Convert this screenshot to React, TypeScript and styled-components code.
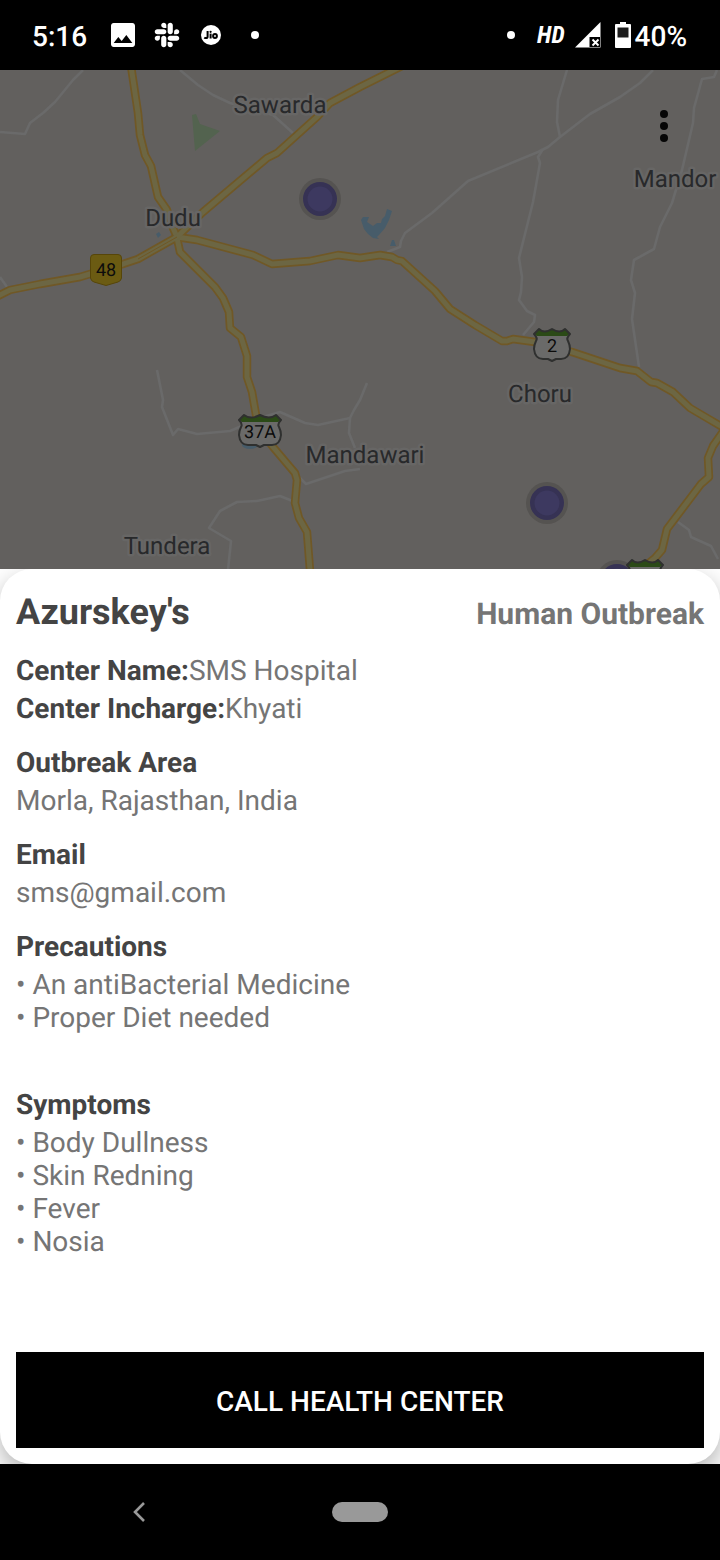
import React from "react";
import styled, { createGlobalStyle } from "styled-components";
import { FaSlack } from "react-icons/fa";

const GlobalStyle = createGlobalStyle`
  *, *::before, *::after { box-sizing: border-box; }
  body {
    margin: 0;
    background: #000;
    font-family: Roboto, "Liberation Sans", sans-serif;
    text-rendering: geometricPrecision;
  }
  h1, h2, p, ul { margin: 0; padding: 0; }
  button { font: inherit; border: 0; padding: 0; cursor: pointer; }
`;

const Screen = styled.div`
  display: flex;
  flex-direction: column;
  min-height: 100vh;
`;

const StatusBar = styled.header`
  position: relative;
  z-index: 1;
  display: flex;
  align-items: center;
  justify-content: space-between;
  height: 70px;
  padding: 0 33px 0 32px;
  background: #000;
  color: #fff;
  font-size: 28px;
  font-weight: 500;
  line-height: 36px;
`;

const StatusGroup = styled.div<{ $gap: number }>`
  display: flex;
  align-items: center;
  gap: ${(p) => p.$gap}px;
`;

const StatusText = styled.span`
  padding-top: 4px;
`;

const StatusSlot = styled.span`
  display: flex;
  align-items: center;
  justify-content: center;
  width: 28px;
  height: 28px;
`;

const Notifications = styled(StatusGroup)`
  margin-left: 6px;
`;

const Battery = styled(StatusGroup)`
  margin-left: 4px;
`;

const Dot = styled.span`
  width: 8px;
  height: 8px;
  border-radius: 50%;
  background: #fff;
`;

const Hd = styled.span`
  padding-left: 12px;
  font-family: "Roboto Condensed", Roboto, "Liberation Sans", sans-serif;
  font-size: 24px;
  font-style: italic;
  font-weight: 700;
`;

const MapArea = styled.main`
  position: relative;
  display: flex;
  flex: 1 0 300px;
  overflow: hidden;
  background: #62605e;
`;

const MapSvg = styled.svg`
  flex: 1;
  width: 100%;
  min-width: 0;
  height: auto;
  min-height: 100%;
  font-family: Roboto, "Liberation Sans", sans-serif;
`;

const MenuButton = styled.button`
  position: absolute;
  top: 32px;
  right: 32px;
  display: flex;
  flex-direction: column;
  align-items: center;
  justify-content: center;
  gap: 4px;
  width: 48px;
  height: 48px;
  background: none;
`;

const MenuDot = styled.span`
  width: 8px;
  height: 8px;
  border-radius: 50%;
  background: #060606;
`;

const SheetBackdrop = styled.div`
  background: #fff;
`;

const Sheet = styled.section`
  display: flex;
  flex-direction: column;
  gap: 21px;
  padding: 22px 16px 16px;
  border-radius: 32px;
  background: #fff;
  box-shadow: 0 10px 24px rgba(0, 0, 0, 0.3);
  color: #757575;
  font-size: 28px;
  line-height: 33px;
`;

const SheetHeader = styled.div`
  display: flex;
  align-items: baseline;
  justify-content: space-between;
`;

const Title = styled.h1`
  color: #444;
  font-size: 36px;
  font-weight: 700;
  line-height: 42px;
`;

const Kind = styled.p`
  font-size: 30px;
  font-weight: 700;
`;

const Group = styled.div`
  display: flex;
  flex-direction: column;
  gap: 5px;
`;

const Label = styled.h2`
  color: #444;
  font-size: 28px;
  font-weight: 700;
`;

const InlineLabel = styled.strong`
  color: #444;
  font-weight: 700;
`;

const BulletList = styled.ul`
  padding-bottom: 33px;
  list-style: none;
`;

const CallButton = styled.button`
  height: 96px;
  margin-top: 40px;
  padding-top: 2px;
  background: #000;
  color: #fff;
  font-size: 28px;
  font-weight: 500;
`;

const NavBar = styled.nav`
  position: relative;
  z-index: 1;
  display: grid;
  grid-template-columns: 1fr auto 1fr;
  align-items: center;
  height: 96px;
  background: #000;
`;

const BackButton = styled.button`
  display: flex;
  align-items: center;
  justify-content: center;
  width: 84px;
  height: 64px;
  margin-left: 97px;
  background: none;
`;

const HomeButton = styled.button`
  width: 56px;
  height: 20px;
  border-radius: 10px;
  background: #999;
`;

const minorRoads = [
  "M83 0 73 10 55 32 43 43 30 53 25 64 0 62",
  "M180 0 198 15 213 25 230 33 273 45 293 63",
  "M0 207 7 217",
  "M567 0 558 30 557 52 560 67",
  "M653 0 640 13 620 27 590 44 560 67 548 77 538 82 468 111 432 143 405 163 401 171 400 177 387 182",
  "M543 79 538 87 540 93 533 132 519 188 522 207 521 222 519 230 527 241 535 245 534 252 523 265",
  "M717 0 714 7 702 9 694 38 693 53 682 100 672 133 660 157 654 179 634 190 631 210 635 223 632 249 639 297",
  "M157 300 163 330 162 337 173 365 178 359 197 364 230 361 263 347 280 342 305 353 318 355 350 348 354 340 360 330 367 313",
  "M350 348 349 363 355 378",
  "M300 408 306 414 345 401 360 399",
  "M295 432 280 426 257 431 237 432 220 441 209 458 231 471 228 500",
  "M678 452 689 460 691 467 711 476 718 489",
];

const highways = [
  "M131 -4 138 43 140 65 145 85 151 96 158 127 167 140 173 158 177 167",
  "M177 168 180 182 200 202 215 217 223 228 229 242 230 258 241 267 247 286 247 307 252 322 256 345 260 360 273 377 295 403 297 410 295 433 299 448 307 462 310 500",
  "M177 167 197 170 253 185 272 194 310 191 338 185 360 188 380 185 392 187 397 190 402 191 435 221 450 239 475 255 502 271 507 271 513 269 535 272 572 282 620 298 637 301 651 312 657 313 673 322 690 338 707 348 724 358",
  "M724 360 713 376 708 388 709 407 701 414 667 459 662 480 655 488 640 500",
  "M402 -4 360 17 330 33 317 47 277 83 267 88 203 142 177 167 138 189 123 194 80 207 40 214 10 220 -4 227",
];

const places = [
  { name: "Sawarda", x: 280, y: 43 },
  { name: "Dudu", x: 173, y: 156 },
  { name: "Mandor", x: 675, y: 117 },
  { name: "Choru", x: 540, y: 332 },
  { name: "Mandawari", x: 365, y: 393 },
  { name: "Tundera", x: 167, y: 484 },
];

const outbreaks = [
  { x: 320, y: 129 },
  { x: 547, y: 433 },
  { x: 617, y: 511 },
];

type ShieldProps = { x: number; y: number; half: number; label: string };

function Shield({ x, y, half: h, label }: ShieldProps) {
  const crown = `M${-h + 5} 1 Q${-h / 2 + 1} 6 0 1 Q${h / 2 - 1} 6 ${h - 5} 1 L${h} 6`;
  const outline = `${crown} Q${h - 4} 10 ${h - 2} 13 Q${h} 17 ${h} 21
    Q${h - 1} 31 ${h - 9} 31 L4 31 L0 33 L-4 31 L${-h + 9} 31 Q${-h + 1} 31 ${-h} 21 Q${-h} 17 ${-h + 2} 13 Q${-h + 4} 10 ${-h} 6 Z`;
  return (
    <g transform={`translate(${x} ${y})`}>
      <path d={outline} fill="#6a6a69" />
      <path d={`${crown} L${h - 3} 8 L${-h + 3} 8 L${-h} 6 Z`} fill="#2b4a17" />
      <path d={outline} fill="none" stroke="#2f302f" strokeWidth="2" strokeLinejoin="round" />
      <text y="24" textAnchor="middle" fontSize="18" fill="#0c0c0c">{label}</text>
    </g>
  );
}

function OutbreakMap() {
  return (
    <MapSvg viewBox="0 0 720 499" preserveAspectRatio="xMidYMin slice" role="img" aria-label="Outbreak map">
      <path d="M192 45 196 44 200 54 220 61 195 81Z" fill="#53634f" />
      <g fill="#475c6a">
        <path d="M361 150 363 147 369 147 367 152 370 154 373 156 377 153 381 153 382 149 385 146 387 139 392 141 389 150 385 158 379 165 377 167 379 169 373 168 368 164 364 159Z" />
        <path d="M392 170 394 170 396 176 390 176Z" />
        <path d="M156 164 159 162 161 165 158 168Z" />
        <ellipse cx="250" cy="375" rx="8" ry="4" />
      </g>
      <g fill="none" stroke="#6a6a6a" strokeWidth="2.6" strokeLinejoin="round">
        {minorRoads.map((d) => <path key={d} d={d} />)}
      </g>
      <g fill="none" strokeLinejoin="round">
        <g stroke="#705826" strokeWidth="8.4">
          {highways.map((d) => <path key={d} d={d} />)}
        </g>
        <g stroke="#6c6643" strokeWidth="5">
          {highways.map((d) => <path key={d} d={d} />)}
        </g>
        <path d="M177 167 138 189" stroke="#705826" strokeWidth="1" />
      </g>
      {outbreaks.map(({ x, y }) => (
        <g key={x}>
          <circle cx={x} cy={y} r="21" fill="#555351" />
          <circle cx={x} cy={y} r="17" fill="#363254" />
          <circle cx={x} cy={y} r="12.5" fill="#3d3960" />
        </g>
      ))}
      <path d="M94 184.500H118Q121.500 184.500 121.500 188V208Q121 211 118 212L106 215.500 94 212Q91 211 90.500 208V188Q90.500 184.500 94 184.500Z" fill="#6b5b12" stroke="#574609" />
      <text x="106" y="206" textAnchor="middle" fontSize="18" fill="#0c0c0c">48</text>
      <Shield x={552} y={258} half={18} label="2" />
      <Shield x={260} y={344} half={21} label="37A" />
      <Shield x={645} y={489} half={18} label="" />
      <g fontSize="24" textAnchor="middle" fill="#28292b" stroke="#676665" strokeWidth="5" strokeLinejoin="round" paintOrder="stroke">
        {places.map((p) => <text key={p.name} x={p.x} y={p.y}>{p.name}</text>)}
      </g>
    </MapSvg>
  );
}

function ImageIcon() {
  return (
    <svg width="24" height="24" viewBox="3 3 18 18" aria-hidden="true">
      <path fill="#fff" d="M21 19V5c0-1.100-.9-2-2-2H5c-1.100 0-2 .9-2 2v14c0 1.100.9 2 2 2h14c1.100 0 2-.9 2-2zM8.500 13.500l2.500 3.010L14.500 12l4.500 6H5l3.500-4.500z" />
    </svg>
  );
}

function JioIcon() {
  return (
    <svg width="20" height="20" viewBox="0 0 20 20" aria-hidden="true">
      <circle cx="10" cy="10" r="10" fill="#fff" />
      <g fill="none" stroke="#000" strokeWidth="2">
        <path d="M6.600 6v5.400q0 1.700-1.700 1.700-.9 0-1.600-.6" />
        <path d="M9.600 8.600v4.900" />
        <circle cx="14" cy="11" r="1.900" />
      </g>
      <circle cx="9.600" cy="6.800" r="1.100" fill="#000" />
    </svg>
  );
}

function SignalIcon() {
  return (
    <svg width="26" height="26" viewBox="0 0 26 26" aria-hidden="true">
      <path d="M0 25.500 25.500 0V25.500Z" fill="#fff" />
      <path d="M14.500 15H25V25H14.500Z" fill="#000" />
      <path d="M17.500 17.500 23.500 23.500M23.500 17.500 17.500 23.500" stroke="#fff" strokeWidth="1.900" />
    </svg>
  );
}

function BatteryIcon() {
  return (
    <svg width="16" height="26" viewBox="0 0 16 26" aria-hidden="true">
      <path d="M5 0H11V2H15Q16 2 16 3V25Q16 26 15 26H1Q0 26 0 25V3Q0 2 1 2H5Z" fill="#fff" />
      <path d="M2.500 5.500H13.500V15.500H2.500Z" fill="#1c1c1c" />
    </svg>
  );
}

const precautions = ["An antiBacterial Medicine", "Proper Diet needed"];
const symptoms = ["Body Dullness", "Skin Redning", "Fever", "Nosia"];

function Bullets({ items }: { items: string[] }) {
  return (
    <BulletList>
      {items.map((item) => <li key={item}>{`• ${item}`}</li>)}
    </BulletList>
  );
}

export default function App() {
  return (
    <Screen>
      <GlobalStyle />
      <StatusBar>
        <StatusGroup $gap={16}>
          <StatusText>5:16</StatusText>
          <Notifications $gap={16}>
            <StatusSlot><ImageIcon /></StatusSlot>
            <StatusSlot><FaSlack size={28} /></StatusSlot>
            <StatusSlot><JioIcon /></StatusSlot>
            <StatusSlot><Dot /></StatusSlot>
          </Notifications>
        </StatusGroup>
        <StatusGroup $gap={10}>
          <Dot />
          <Hd>HD</Hd>
          <SignalIcon />
          <Battery $gap={4}>
            <BatteryIcon />
            <StatusText>40%</StatusText>
          </Battery>
        </StatusGroup>
      </StatusBar>

      <MapArea>
        <OutbreakMap />
        <MenuButton type="button" aria-label="More options">
          <MenuDot />
          <MenuDot />
          <MenuDot />
        </MenuButton>
      </MapArea>

      <SheetBackdrop>
        <Sheet>
          <SheetHeader>
            <Title>Azurskey's</Title>
            <Kind>Human Outbreak</Kind>
          </SheetHeader>
          <Group>
            <p><InlineLabel>Center Name:</InlineLabel>SMS Hospital</p>
            <p><InlineLabel>Center Incharge:</InlineLabel>Khyati</p>
          </Group>
          <Group>
            <Label>Outbreak Area</Label>
            <p>Morla, Rajasthan, India</p>
          </Group>
          <Group>
            <Label>Email</Label>
            <p>sms@gmail.com</p>
          </Group>
          <Group>
            <Label>Precautions</Label>
            <Bullets items={precautions} />
          </Group>
          <Group>
            <Label>Symptoms</Label>
            <Bullets items={symptoms} />
          </Group>
          <CallButton type="button">CALL HEALTH CENTER</CallButton>
        </Sheet>
      </SheetBackdrop>

      <NavBar aria-label="System">
        <BackButton type="button" aria-label="Back">
          <svg width="12" height="20" viewBox="0 0 12 20" aria-hidden="true">
            <path d="M11 1 2 10 11 19" fill="none" stroke="#999" strokeWidth="2.600" />
          </svg>
        </BackButton>
        <HomeButton type="button" aria-label="Home" />
      </NavBar>
    </Screen>
  );
}
